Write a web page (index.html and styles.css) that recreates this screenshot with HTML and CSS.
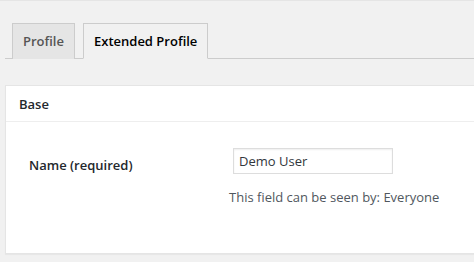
FILE: index.html
```
<!DOCTYPE html>
<html lang="en">
<head>
    <meta charset="UTF-8">
    <title>Extended Profile</title>
    <link rel="stylesheet" href="styles.css">
</head>
<body>
    <div class="wrap">
        <!-- Abas do perfil -->
        <nav class="tabs">
            <a class="tab" href="#">Profile</a>
            <a class="tab tab-active" href="#">Extended Profile</a>
        </nav>

        <!-- Grupo de campos -->
        <div class="panel">
            <h2 class="panel-title">Base</h2>
            <div class="panel-body">
                <div class="field-row">
                    <label class="field-label" for="name">Name (required)</label>
                    <div class="field-value">
                        <input id="name" class="field-input" type="text" value="Demo User">
                        <p class="field-desc">This field can be seen by: Everyone</p>
                    </div>
                </div>
            </div>
        </div>
    </div>
</body>
</html>
```

FILE: styles.css
```
* {
    margin: 0;
    padding: 0;
    box-sizing: border-box;
}

body {
    font-family: "Open Sans", "Noto Sans", sans-serif;
    font-size: 13px;
    background: #f1f1f1;
    color: #444;
    border-top: 1px solid #e5e5e5;
    height: 262px;
    overflow: hidden;
}

.wrap {
    padding: 22px 0 0 5px;
}

.tabs {
    display: flex;
    gap: 8px;
    padding-left: 7px;
    border-bottom: 1px solid #ccc;
}

.tab {
    display: block;
    height: 36px;
    padding: 0 10px;
    line-height: 34px;
    font-size: 13px;
    font-weight: 600;
    color: #555;
    text-decoration: none;
    background: #e5e5e5;
    border: 1px solid #ccc;
    border-bottom: none;
    margin-bottom: -1px;
}

.tab-active {
    background: #f1f1f1;
    color: #000;
    border-bottom: 1px solid #f1f1f1;
}

.panel {
    margin-top: 26px;
    background: #fff;
    border: 1px solid #e5e5e5;
    border-right: none;
    box-shadow: 0 1px 1px rgba(0, 0, 0, 0.04);
    height: 169px;
}

.panel-title {
    font-size: 13px;
    font-weight: 600;
    color: #23282d;
    padding: 0 13px;
    height: 36px;
    line-height: 36px;
    border-bottom: 1px solid #eee;
}

.panel-body {
    padding: 26px 0 0 23px;
}

.field-row {
    display: flex;
}

.field-label {
    width: 200px;
    font-size: 13px;
    font-weight: 600;
    color: #23282d;
    padding-top: 8px;
}

.field-input {
    display: block;
    width: 160px;
    height: 26px;
    margin-left: 4px;
    padding: 0 5px;
    font-family: inherit;
    font-size: 13px;
    color: #32373c;
    border: 1px solid #ddd;
    box-shadow: inset 0 1px 2px rgba(0, 0, 0, 0.07);
    outline: none;
}

.field-desc {
    margin-top: 14px;
    color: #50575e;
}
```
